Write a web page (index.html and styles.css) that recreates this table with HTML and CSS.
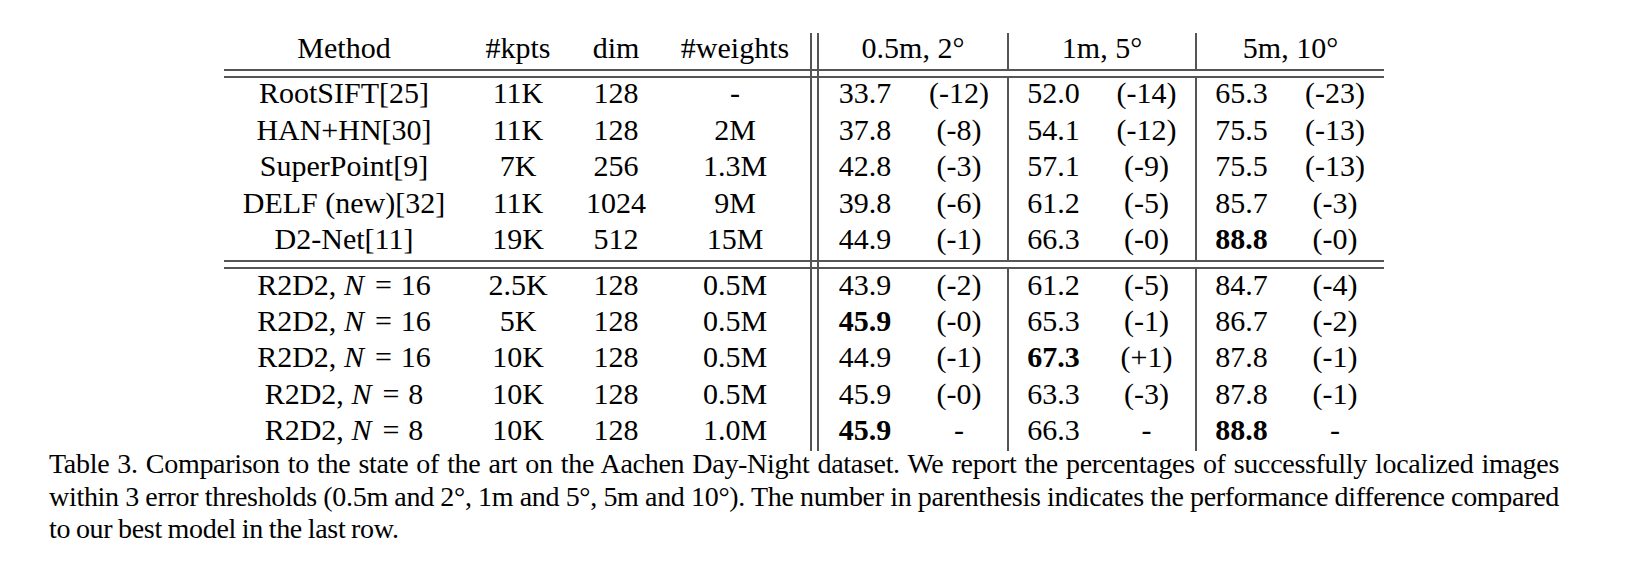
FILE: index.html
```html
<!DOCTYPE html>
<html lang="en">
<head>
<meta charset="utf-8">
<title>Table 3</title>
<link rel="stylesheet" href="styles.css">
</head>
<body>
<figure class="fig">
  <table class="res">
    <colgroup>
      <col class="c-method"><col class="c-kpts"><col class="c-dim"><col class="c-w"><col class="c-sp">
      <col class="c-a1"><col class="c-b1"><col class="c-a2"><col class="c-b2"><col class="c-a3"><col class="c-b3">
    </colgroup>
    <thead>
      <tr>
        <th>Method</th><th>#kpts</th><th>dim</th><th>#weights</th><td class="sp"></td>
        <th colspan="2">0.5m, 2°</th><th colspan="2" class="vl">1m, 5°</th><th colspan="2" class="vl">5m, 10°</th>
      </tr>
    </thead>
    <tbody>
      <tr class="gap"><td colspan="4"></td><td class="sp"></td><td colspan="6"></td></tr>
      <tr><td>RootSIFT[25]</td><td>11K</td><td>128</td><td>-</td><td class="sp"></td><td>33.7</td><td>(-12)</td><td class="vl">52.0</td><td>(-14)</td><td class="vl">65.3</td><td>(-23)</td></tr>
      <tr><td>HAN+HN[30]</td><td>11K</td><td>128</td><td>2M</td><td class="sp"></td><td>37.8</td><td>(-8)</td><td class="vl">54.1</td><td>(-12)</td><td class="vl">75.5</td><td>(-13)</td></tr>
      <tr><td>SuperPoint[9]</td><td>7K</td><td>256</td><td>1.3M</td><td class="sp"></td><td>42.8</td><td>(-3)</td><td class="vl">57.1</td><td>(-9)</td><td class="vl">75.5</td><td>(-13)</td></tr>
      <tr><td>DELF (new)[32]</td><td>11K</td><td>1024</td><td>9M</td><td class="sp"></td><td>39.8</td><td>(-6)</td><td class="vl">61.2</td><td>(-5)</td><td class="vl">85.7</td><td>(-3)</td></tr>
      <tr><td>D2-Net[11]</td><td>19K</td><td>512</td><td>15M</td><td class="sp"></td><td>44.9</td><td>(-1)</td><td class="vl">66.3</td><td>(-0)</td><td class="vl"><b>88.8</b></td><td>(-0)</td></tr>
      <tr class="gap"><td colspan="4"></td><td class="sp"></td><td colspan="6"></td></tr>
      <tr><td>R2D2, <i>N</i><span class="eq">=</span>16</td><td>2.5K</td><td>128</td><td>0.5M</td><td class="sp"></td><td>43.9</td><td>(-2)</td><td class="vl">61.2</td><td>(-5)</td><td class="vl">84.7</td><td>(-4)</td></tr>
      <tr><td>R2D2, <i>N</i><span class="eq">=</span>16</td><td>5K</td><td>128</td><td>0.5M</td><td class="sp"></td><td><b>45.9</b></td><td>(-0)</td><td class="vl">65.3</td><td>(-1)</td><td class="vl">86.7</td><td>(-2)</td></tr>
      <tr><td>R2D2, <i>N</i><span class="eq">=</span>16</td><td>10K</td><td>128</td><td>0.5M</td><td class="sp"></td><td>44.9</td><td>(-1)</td><td class="vl"><b>67.3</b></td><td>(+1)</td><td class="vl">87.8</td><td>(-1)</td></tr>
      <tr><td>R2D2, <i>N</i><span class="eq">=</span>8</td><td>10K</td><td>128</td><td>0.5M</td><td class="sp"></td><td>45.9</td><td>(-0)</td><td class="vl">63.3</td><td>(-3)</td><td class="vl">87.8</td><td>(-1)</td></tr>
      <tr><td>R2D2, <i>N</i><span class="eq">=</span>8</td><td>10K</td><td>128</td><td>1.0M</td><td class="sp"></td><td><b>45.9</b></td><td>-</td><td class="vl">66.3</td><td>-</td><td class="vl"><b>88.8</b></td><td>-</td></tr>
    </tbody>
  </table>
  <figcaption class="cap">
    <span class="ln">Table 3. Comparison to the state of the art on the Aachen Day-Night dataset. We report the percentages of successfully localized images</span>
    <span class="ln">within 3 error thresholds (0.5m and 2°, 1m and 5°, 5m and 10°). The number in parenthesis indicates the performance difference compared</span>
    <span class="ln last">to our best model in the last row.</span>
  </figcaption>
</figure>
</body>
</html>
```
FILE: styles.css
```css
html, body {
  margin: 0;
  padding: 0;
  background: #fff;
}
body {
  color: #000;
  font-family: "Liberation Serif", "Times New Roman", serif;
}
.fig {
  margin: 0 0 0 49px;
  padding-top: 32.5px;
  width: 1510px;
}
.res {
  border-collapse: separate;
  border-spacing: 0;
  table-layout: fixed;
  width: 1160px;
  margin: 0 auto;
  font-size: 30px;
}
.c-method { width: 240px; }
.c-kpts { width: 108px; }
.c-dim { width: 88px; }
.c-w { width: 150px; }
.c-sp { width: 9px; }
.c-a1 { width: 92px; }
.c-b1 { width: 96px; }
.c-a2 { width: 91px; }
.c-b2 { width: 97px; }
.c-a3 { width: 91px; }
.c-b3 { width: 98px; }
.res th, .res td {
  font-weight: normal;
  text-align: center;
  white-space: nowrap;
  line-height: 30px;
  padding: 0.4px 0 6.05px;
  box-sizing: border-box;
  overflow: visible;
}
.res b { font-weight: bold; }
.res .sp {
  padding: 0;
  border-left: 2px solid #555;
  border-right: 2px solid #555;
}
.res .vl {
  border-left: 2px solid #555;
}
.res .gap td {
  height: 9px;
  padding: 0;
  line-height: 0;
  border-top: 2px solid #555;
  border-bottom: 2px solid #555;
}
.eq {
  display: inline-block;
  margin: 0 9px 0 11px;
}
.cap {
  margin: -3px 0 0;
  font-size: 28px;
  line-height: 32.5px;
}
.cap .ln {
  display: block;
  text-align: justify;
  text-align-last: justify;
  white-space: nowrap;
  letter-spacing: -0.3px;
  word-spacing: -1px;
}
.cap .ln.last {
  text-align-last: left;
}
```
